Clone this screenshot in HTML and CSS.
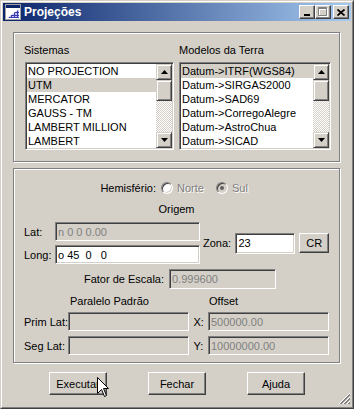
FILE: index.html
```html
<!DOCTYPE html>
<html lang="pt">
<head>
    <meta charset="UTF-8">
    <title>Projeções</title>
    <link rel="stylesheet" href="styles.css">
</head>
<body>

<div class="window">
    <div class="frame">
        <div class="titlebar">
            <svg class="title-icon" width="16" height="16" viewBox="0 0 16 16">
                <rect x="0.5" y="0.5" width="15" height="15" fill="#fff" stroke="#a0a0a0"/>
                <rect x="1" y="1" width="14" height="3" fill="#0a246a"/>
                <path d="M2 14 L14 5 L14 14 Z" fill="#c8c8f8"/>
                <g stroke="#3a3ab0" stroke-width="1">
                    <path d="M6 11.5H14M4 13.5H14M10 8.5H14"/>
                    <path d="M6.5 14V11M9.5 14V8.5M12.5 14V6.5"/>
                </g>
            </svg>
            <span class="title-text">Projeções</span>
            <span class="tb-btn">
                <svg width="8" height="8" viewBox="0 0 8 8"><rect x="1" y="6" width="6" height="2" fill="#000"/></svg>
            </span>
            <span class="tb-btn">
                <svg width="10" height="10" viewBox="0 0 10 10">
                    <path d="M1.5 1.5h8v8h-8z M1 2.5h9" fill="none" stroke="#fff"/>
                    <path d="M0.5 0.5h8v8h-8z M0 1.5h9" fill="none" stroke="#808080"/>
                </svg>
            </span>
            <span class="tb-btn close">
                <svg width="8" height="7" viewBox="0 0 8 7">
                    <path d="M0.5 0.5L7.5 6.5M7.5 0.5L0.5 6.5" stroke="#000" stroke-width="1.7"/>
                </svg>
            </span>
        </div>

        <div class="client">
            <!-- sistemas / modelos da terra -->
            <div class="group systems">
                <div class="col col-left">
                    <div class="caption">Sistemas</div>
                    <div class="listbox list-sys">
                        <ul class="items">
                            <li>NO PROJECTION</li>
                            <li class="sel">UTM</li>
                            <li>MERCATOR</li>
                            <li>GAUSS - TM</li>
                            <li>LAMBERT MILLION</li>
                            <li>LAMBERT</li>
                        </ul>
                        <div class="scrollbar">
                            <span class="sb-btn">
                                <svg width="7" height="4" viewBox="0 0 7 4"><path d="M3.5 0L7 4H0Z" fill="#000"/></svg>
                            </span>
                            <span class="sb-thumb"></span>
                            <span class="sb-track"></span>
                            <span class="sb-btn">
                                <svg width="7" height="4" viewBox="0 0 7 4"><path d="M0 0H7L3.5 4Z" fill="#000"/></svg>
                            </span>
                        </div>
                    </div>
                </div>
                <div class="col col-right">
                    <div class="caption">Modelos da Terra</div>
                    <div class="listbox list-datum">
                        <ul class="items">
                            <li class="sel">Datum-&gt;ITRF(WGS84)</li>
                            <li>Datum-&gt;SIRGAS2000</li>
                            <li>Datum-&gt;SAD69</li>
                            <li>Datum-&gt;CorregoAlegre</li>
                            <li>Datum-&gt;AstroChua</li>
                            <li>Datum-&gt;SICAD</li>
                        </ul>
                        <div class="scrollbar">
                            <span class="sb-btn">
                                <svg width="7" height="4" viewBox="0 0 7 4"><path d="M3.5 0L7 4H0Z" fill="#000"/></svg>
                            </span>
                            <span class="sb-thumb"></span>
                            <span class="sb-track"></span>
                            <span class="sb-btn">
                                <svg width="7" height="4" viewBox="0 0 7 4"><path d="M0 0H7L3.5 4Z" fill="#000"/></svg>
                            </span>
                        </div>
                    </div>
                </div>
            </div>

            <!-- parametros da projecao -->
            <div class="group params">
                <div class="hemi">
                    <span class="hemi-lbl">Hemisfério:</span>
                    <span class="opt opt-norte"><span class="radio"></span><span class="disabled-text">Norte</span></span>
                    <span class="opt"><span class="radio checked"></span><span class="disabled-text">Sul</span></span>
                </div>
                <div class="origem">Origem</div>
                <div class="coords">
                    <div class="latlong">
                        <div class="field-row">
                            <span class="lbl-lat">Lat:</span>
                            <input class="field ll-field" type="text" value="n 0 0 0.00" disabled>
                        </div>
                        <div class="field-row">
                            <span class="lbl-lat">Long:</span>
                            <input class="field ll-field" type="text" value="o 45  0   0">
                        </div>
                    </div>
                    <span class="zona-lbl">Zona:</span>
                    <input class="field zona-field" type="text" value="23">
                    <button class="btn btn-cr">CR</button>
                </div>
                <div class="fator">
                    <span class="fator-lbl">Fator de Escala:</span>
                    <input class="field fator-field" type="text" value="0.999600" disabled>
                </div>
                <div class="heads">
                    <span class="head-paralelo">Paralelo Padrão</span>
                    <span>Offset</span>
                </div>
                <div class="pair-row first">
                    <span class="pair-lbl">Prim Lat:</span>
                    <input class="field pair-field" type="text" value="" disabled>
                    <span class="xy-lbl">X:</span>
                    <input class="field pair-field" type="text" value="500000.00" disabled>
                </div>
                <div class="pair-row">
                    <span class="pair-lbl">Seg Lat:</span>
                    <input class="field pair-field" type="text" value="" disabled>
                    <span class="xy-lbl">Y:</span>
                    <input class="field pair-field" type="text" value="10000000.00" disabled>
                </div>
            </div>

            <div class="actions">
                <button class="btn btn-action">Executar</button>
                <button class="btn btn-action">Fechar</button>
                <button class="btn btn-action">Ajuda</button>
            </div>
        </div>
    </div>

    <svg class="cursor" width="13" height="21" viewBox="0 0 13 21">
        <path d="M0.5 0.5V16.5L4.5 12.5L7.5 19.5L9.5 18.5L6.5 11.5H11.5Z" fill="#fff" stroke="#000" stroke-linejoin="miter"/>
    </svg>
    <svg class="grip" width="12" height="12" viewBox="0 0 12 12" shape-rendering="crispEdges">
        <g stroke-width="1">
            <path d="M11 0L0 11" stroke="#fff"/>
            <path d="M11 1L1 11M11 2L2 11" stroke="#808080"/>
            <path d="M11 4L4 11" stroke="#fff"/>
            <path d="M11 5L5 11M11 6L6 11" stroke="#808080"/>
            <path d="M11 8L8 11" stroke="#fff"/>
            <path d="M11 9L9 11M11 10L10 11" stroke="#808080"/>
        </g>
    </svg>
</div>

</body>
</html>
```

FILE: styles.css
```css
body {
    margin: 0;
    font-family: "Liberation Sans", Arial, sans-serif;
    font-size: 11px;
    color: #000;
    background-color: #d4d0c8;
}
.window {
    position: relative;
    width: 354px;
    height: 409px;
    box-sizing: border-box;
    border: 1px solid;
    border-color: #d4d0c8 #404040 #404040 #d4d0c8;
    background-color: #d4d0c8;
}
.frame {
    height: 100%;
    box-sizing: border-box;
    border: 1px solid;
    border-color: #fff #808080 #808080 #fff;
    padding: 1px;
}

/* title bar */
.titlebar {
    height: 18px;
    display: flex;
    align-items: center;
    padding: 0 2px;
    background: linear-gradient(to right, #0a246a, #a6caf0);
    color: #fff;
    font-weight: bold;
    font-size: 12px;
}
.title-icon {
    margin-right: 3px;
}
.title-text {
    flex: 1;
}
.tb-btn {
    width: 16px;
    height: 14px;
    box-sizing: border-box;
    display: flex;
    align-items: center;
    justify-content: center;
    background-color: #d4d0c8;
    border: 1px solid;
    border-color: #fff #404040 #404040 #fff;
    box-shadow: inset -1px -1px #808080;
}
.tb-btn.close {
    margin-left: 2px;
}

/* client area */
.client {
    padding: 11px 10px 0 10px;
}
.group {
    width: 327px;
    box-sizing: border-box;
    border: 1px solid #808080;
    box-shadow: inset 1px 1px #fff, 1px 1px #fff;
    background-color: #d4d0c8;
}
.systems {
    height: 130px;
    display: flex;
    padding: 10px 0 0 10px;
}
.caption {
    height: 14px;
    line-height: 14px;
    margin-bottom: 5px;
}
.col-left {
    width: 150px;
}
.col-left .listbox {
    margin-left: 1px;
    width: 149px;
}
.col-right {
    margin-left: 5px;
}
.col-right .listbox {
    width: 152px;
}

/* list boxes */
.listbox {
    display: flex;
    height: 88px;
    box-sizing: border-box;
    border: 1px solid;
    border-color: #808080 #fff #fff #808080;
    box-shadow: inset 1px 1px #404040, inset -1px -1px #d4d0c8;
    padding: 1px;
    background-color: #fff;
}
.items {
    flex: 1;
    margin: 0;
    padding: 0;
    list-style: none;
    overflow: hidden;
}
.items li {
    height: 14px;
    line-height: 14px;
    padding-left: 1px;
    white-space: nowrap;
}
.items li.sel {
    background-color: #d4d0c8;
}
.scrollbar {
    width: 16px;
    display: flex;
    flex-direction: column;
}
.sb-btn,
.sb-thumb {
    box-sizing: border-box;
    background-color: #d4d0c8;
    border: 1px solid;
    border-color: #d4d0c8 #404040 #404040 #d4d0c8;
    box-shadow: inset 1px 1px #fff, inset -1px -1px #808080;
}
.sb-btn {
    height: 16px;
    display: flex;
    align-items: center;
    justify-content: center;
}
.sb-thumb {
    height: 21px;
}
.sb-track {
    flex: 1;
    background: repeating-conic-gradient(#d4d0c8 0 25%, #fff 0 50%) 0 0 / 2px 2px;
}

/* parameters */
.params {
    height: 195px;
    margin-top: 6px;
    padding: 0 10px;
}
.hemi {
    display: flex;
    align-items: center;
    height: 14px;
    margin-top: 12px;
}
.hemi-lbl {
    width: 132px;
    text-align: right;
}
.opt {
    display: flex;
    align-items: center;
    gap: 4px;
}
.opt-norte {
    width: 55px;
    margin-left: 5px;
}
.radio {
    position: relative;
    width: 12px;
    height: 12px;
    box-sizing: border-box;
    border-radius: 50%;
    border: 1px solid;
    border-color: #808080 #fff #fff #808080;
    box-shadow: inset 1px 1px #404040, inset -1px -1px #d4d0c8;
    background-color: #fff;
}
.radio.checked {
    background-color: #d4d0c8;
}
.radio.checked::after {
    content: "";
    position: absolute;
    left: 3px;
    top: 3px;
    width: 4px;
    height: 4px;
    border-radius: 50%;
    background-color: #606060;
}
.disabled-text {
    color: #808080;
    text-shadow: 1px 1px #fff;
}
.origem {
    height: 14px;
    line-height: 14px;
    margin-top: 7px;
    text-align: center;
}
.coords {
    display: flex;
    align-items: center;
    margin-top: 6px;
}
.latlong {
    display: flex;
    flex-direction: column;
    gap: 4px;
}
.field-row {
    display: flex;
    align-items: center;
}
.lbl-lat {
    width: 31px;
}
.field {
    box-sizing: border-box;
    height: 19px;
    margin: 0;
    padding: 0 2px;
    font-family: "Liberation Sans", Arial, sans-serif;
    font-size: 11px;
    color: #000;
    background-color: #fff;
    border: 1px solid;
    border-color: #808080 #fff #fff #808080;
    box-shadow: inset 1px 1px #404040, inset -1px -1px #d4d0c8;
    outline: none;
    white-space: pre;
}
.field:disabled {
    color: #808080;
    background-color: #d4d0c8;
}
.ll-field {
    width: 145px;
}
.zona-lbl {
    width: 33px;
    margin-left: 3px;
}
.zona-field {
    width: 60px;
    height: 21px;
}
.btn {
    box-sizing: border-box;
    padding: 0;
    font-family: "Liberation Sans", Arial, sans-serif;
    font-size: 11px;
    color: #000;
    background-color: #d4d0c8;
    border: 1px solid;
    border-color: #fff #404040 #404040 #fff;
    box-shadow: inset -1px -1px #808080;
}
.btn-cr {
    width: 30px;
    height: 20px;
    margin-left: 4px;
}
.fator {
    display: flex;
    align-items: center;
    margin-top: 5px;
}
.fator-lbl {
    width: 140px;
    text-align: right;
}
.fator-field {
    width: 107px;
    height: 20px;
    margin-left: 5px;
}
.heads {
    display: flex;
    height: 14px;
    line-height: 14px;
    margin-top: 5px;
}
.head-paralelo {
    width: 139px;
    margin-left: 46px;
}
.pair-row {
    display: flex;
    align-items: center;
    margin-top: 5px;
}
.pair-row.first {
    margin-top: 4px;
}
.pair-lbl {
    width: 46px;
}
.pair-field {
    width: 121px;
}
.xy-lbl {
    width: 15px;
    margin-left: 4px;
}

/* bottom buttons */
.actions {
    display: flex;
    margin-top: 9px;
}
.btn-action {
    width: 58px;
    height: 23px;
    margin-left: 41px;
}
.btn-action:first-child {
    margin-left: 36px;
}

/* overlays */
.cursor {
    position: absolute;
    left: 96px;
    top: 376px;
}
.grip {
    position: absolute;
    left: 338px;
    top: 392px;
}
```
